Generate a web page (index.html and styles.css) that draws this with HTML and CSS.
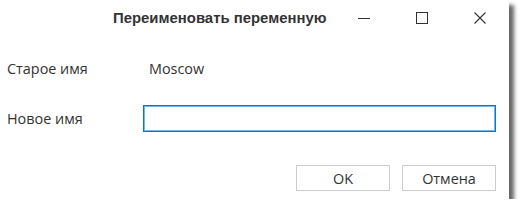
FILE: index.html
```html
<!DOCTYPE html>
<html lang="ru">
<head>
<meta charset="utf-8">
<title>Переименовать переменную</title>
<link rel="stylesheet" href="styles.css">
</head>
<body>
<div class="dialog">
  <div class="titlebar">
    <div class="title">Переименовать переменную</div>
    <div class="controls">
      <div class="ctrl">
        <svg width="12" height="12" viewBox="0 0 12 12"><path d="M0 6.5H12" stroke="#333" stroke-width="1"/></svg>
      </div>
      <div class="ctrl">
        <svg width="12" height="12" viewBox="0 0 12 12"><rect x="0.5" y="0.5" width="11" height="11" fill="none" stroke="#333" stroke-width="1"/></svg>
      </div>
      <div class="ctrl">
        <svg width="12" height="12" viewBox="0 0 12 12"><path d="M0.5 0.5L11.5 11.5M11.5 0.5L0.5 11.5" stroke="#333" stroke-width="1.1"/></svg>
      </div>
    </div>
  </div>
  <div class="form">
    <div class="label">Старое имя</div>
    <div class="value">Moscow</div>
    <div class="label">Новое имя</div>
    <input class="input" type="text">
  </div>
  <div class="footer">
    <button class="btn">OK</button>
    <button class="btn">Отмена</button>
  </div>
</div>
</body>
</html>
```

FILE: styles.css
```css
html, body {
  margin: 0;
  padding: 0;
  background: #ffffff;
}
body {
  font-family: "Open Sans", "Noto Sans", sans-serif;
  color: #333333;
}
.dialog {
  width: 509px;
  height: 199px;
  background: #ffffff;
  box-shadow: 5px 5px 4px rgba(0, 0, 0, 0.6);
  display: flex;
  flex-direction: column;
  box-sizing: border-box;
}
.titlebar {
  height: 36px;
  display: flex;
  align-items: center;
}
.title {
  margin-left: 113px;
  flex: 1;
  font-family: "Liberation Sans", Arial, sans-serif;
  font-weight: bold;
  font-size: 14.9px;
  color: #333333;
}
.controls {
  display: flex;
  height: 36px;
}
.ctrl {
  width: 58px;
  height: 36px;
  display: flex;
  align-items: center;
  justify-content: center;
}
.form {
  display: grid;
  grid-template-columns: 136px 353px;
  grid-template-rows: 27px 27px;
  row-gap: 23px;
  padding-left: 7px;
  margin-top: 19px;
  align-items: center;
  font-size: 14.4px;
}
.value {
  padding-left: 6px;
}
.input {
  box-sizing: border-box;
  width: 353px;
  height: 27px;
  margin: 0;
  border: 1px solid #0078d7;
  outline: 1px solid rgba(0, 120, 215, 0.55);
  outline-offset: -2px;
  background: #ffffff;
  padding: 0 6px;
  font: inherit;
}
.footer {
  display: flex;
  justify-content: flex-end;
  gap: 12px;
  padding-right: 13px;
  margin-top: 33px;
}
.btn {
  box-sizing: border-box;
  width: 94px;
  height: 26px;
  margin: 0;
  background: #ffffff;
  border: 1px solid #cccccc;
  font-family: "Open Sans", "Noto Sans", sans-serif;
  font-size: 14.4px;
  color: #333333;
  padding: 0;
}
```
